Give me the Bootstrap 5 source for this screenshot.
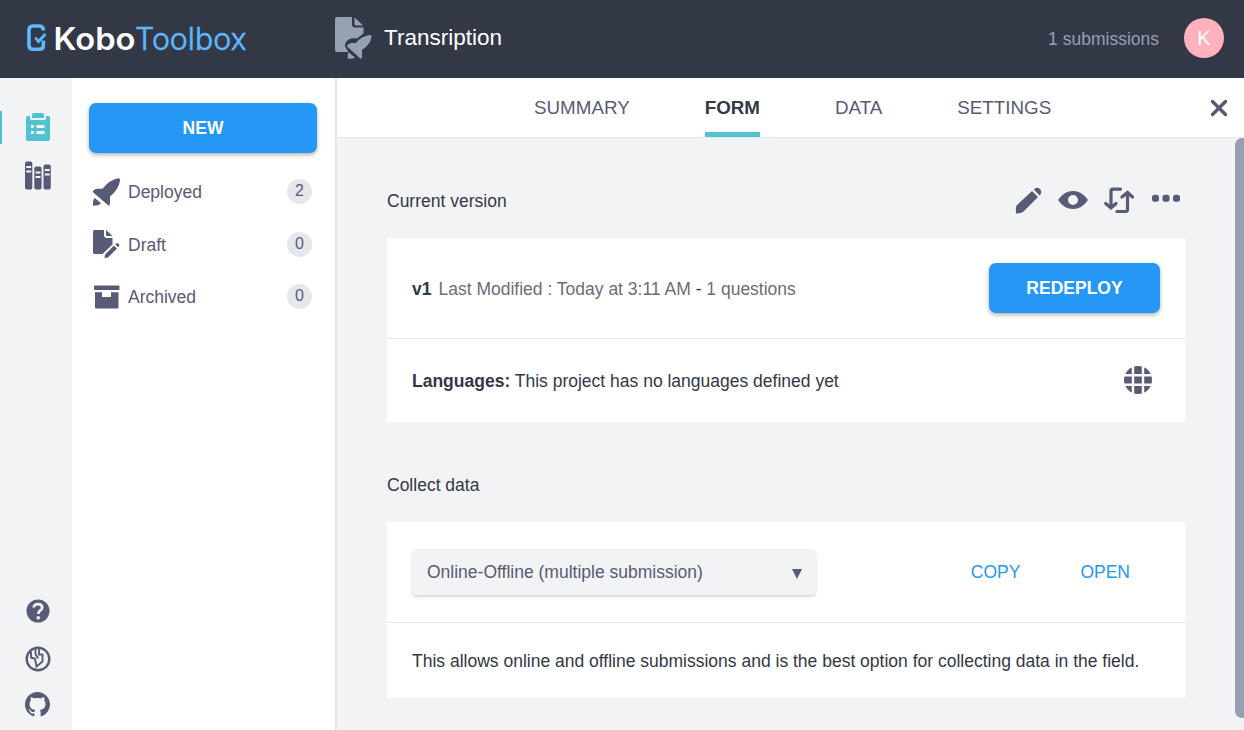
<!DOCTYPE html>
<html lang="en">
<head>
<meta charset="utf-8">
<meta name="viewport" content="width=device-width, initial-scale=1">
<title>KoboToolbox - Transription</title>
<link href="https://cdn.jsdelivr.net/npm/bootstrap@5.3.0/dist/css/bootstrap.min.css" rel="stylesheet">
<style>
  :root { --ink:#575b76; --dark:#333847; --line:#e6e7ed; --panel:#f2f3f5; --blue:#2598f5; --teal:#50c3d1; }
  body { font-family:"Liberation Sans",Arial,sans-serif; font-size:17.5px; line-height:24px; color:#333847; background:var(--panel); height:100vh; overflow:hidden; }
  svg { display:block; flex:none; }
  .topbar { height:78px; background:var(--dark); padding:0 20px 2px 26px; }
  .form-title { font-size:22.5px; line-height:30px; color:#fff; margin-left:13px; }
  .sub-count { color:#989fb3; margin-right:25px; padding-top:1px; }
  .avatar { width:40px; height:40px; background:#ffb1be; color:#fff; font-size:20px; }
  .rail { width:72px; padding:33px 0 13.5px; color:var(--ink); }
  .rail-link { width:100%; padding-left:2px; color:inherit; }
  .rail-link.active { border-left:2px solid var(--teal); padding:0 0 2px; color:var(--teal); height:33px; }
  .sidebar { width:265px; background:#fff; border-right:2px solid var(--line); padding:25px 18px 0 17px; color:var(--ink); }
  .btn-kobo { --bs-btn-color:#fff; --bs-btn-bg:var(--blue); --bs-btn-hover-bg:#1f86da; --bs-btn-hover-color:#fff; height:50px; border:0; border-radius:7px; font-size:17.5px; font-weight:700; line-height:24px; box-shadow:0 2px 4px rgba(0,0,0,.3); }
  .filter-row { height:26px; padding:0 5px 0 3px; }
  .filter-row svg { margin-right:7px; }
  .count { width:25px; height:25px; margin-top:-2px; background:var(--line); font-size:16px; line-height:24px; text-align:center; }
  .tabs { height:60px; background:#fff; border-bottom:1px solid var(--line); padding:0 16px 0 197px; font-size:18.8px; }
  .tab-item { height:59px; margin-right:75px; line-height:60px; color:var(--ink); text-decoration:none; }
  .tab-item.active { color:var(--dark); font-weight:700; border-bottom:5px solid var(--teal); }
  .close-btn { margin-left:auto; color:var(--ink); }
  .content { padding:38px 50px 0; }
  .section-head { height:50px; }
  .tools { color:var(--ink); }
  .panel { background:#fff; }
  .panel-row { padding:0 25px; }
  .panel-row + .panel-row { border-top:1px solid var(--line); }
  .meta { color:#6b6d78; margin-left:7px; }
  .picker { width:404px; height:46px; margin-left:-.5px; background:var(--panel); border-radius:5px; box-shadow:0 2px 3px rgba(0,0,0,.16); padding:0 14px 0 15.5px; color:var(--ink); }
  .act { color:var(--blue); text-decoration:none; }
  .scroll-col { width:9px; height:580px; background:#979fb2; border-radius:7px 0 0 7px; }
</style>
</head>
<body class="d-flex flex-column">
<header class="topbar d-flex align-items-center flex-shrink-0">
  <svg width="226" height="40" viewBox="0 0 226 40" role="img" aria-label="KoboToolbox">
    <path d="M17.300 12.500V12Q17.300 8 13.500 8H7Q3 8 3 12V27.500Q3 31.300 7 31.300H13.500Q17.300 31.300 17.300 27.500V22.500" fill="none" stroke="#5eb8fd" stroke-width="3.600"/>
    <path d="M9.300 19.500l3.200 4 7-7.500" fill="none" stroke="#5eb8fd" stroke-width="2.800"/>
    <text x="27.500" y="31.500" font-family="Inter,sans-serif" font-size="31" font-weight="600" fill="#fff" textLength="82" lengthAdjust="spacingAndGlyphs">Kobo</text>
    <text x="109" y="31.500" font-family="Inter,sans-serif" font-size="30.500" font-weight="300" fill="#5eb8fd" stroke="#5eb8fd" stroke-width=".6" textLength="111.500" lengthAdjust="spacingAndGlyphs">Toolbox</text>
  </svg>
  <svg style="margin-left:82px" width="38" height="42" viewBox="0 0 38 42" fill="#98a0b4">
    <path d="M3 0H18V7.500Q18 10.500 21 10.500H29.500V16.500L23 21.500Q16 20.500 12.500 24.500Q9.500 28 12.500 32L14.500 35H3Q1 35 1 33V2Q1 0 3 0z"/><path d="M20.500 0.500l8.500 8H22Q20.500 8.500 20.500 7z"/>
    <path d="M35.500 18Q38 17.600 37.500 20Q36 28 28 33V40.500Q27.500 42.500 26 41.200L12.800 29.200Q14 26.500 17 26H22Q27.500 19 35.500 18z"/><path d="M14.500 35.300l6.500 5.200q-2.500 1.700-7 1.200q-.8-3.500.5-6.400z"/>
  </svg>
  <div class="form-title" style="margin-left:12px">Transription</div>
  <div class="sub-count ms-auto">1 submissions</div>
  <div class="avatar rounded-circle d-flex align-items-center justify-content-center">K</div>
</header>

<div class="d-flex flex-grow-1">
  <nav class="rail d-flex flex-column flex-shrink-0">
    <a class="rail-link active d-flex align-items-center justify-content-center" href="#" aria-label="Projects">
      <svg style="margin-left:1px" width="24" height="28" viewBox="0 0 24 28"><path fill="currentColor" d="M2 3H4V5Q4 7 6 7H18Q20 7 20 5V3H22Q24 3 24 5V26Q24 28 22 28H2Q0 28 0 26V5Q0 3 2 3z"/><path fill="currentColor" d="M6 2Q6 0 8 0H16Q18 0 18 2V5H6z"/><path stroke="#f2f3f5" stroke-width="3" d="M5 13.500h3M10.500 13.500H18.500M5 19.500h3M10.500 19.500H18.500"/></svg>
    </a>
    <a class="rail-link d-flex justify-content-center" style="margin-top:17px" href="#" aria-label="Library">
      <svg style="margin-left:1px" width="26" height="29" viewBox="0 0 26 29"><g fill="currentColor"><rect y=".5" width="7.300" height="28" rx="2"/><rect x="9.300" y="5.500" width="7.300" height="23" rx="2"/><rect x="18.500" y="3.500" width="7.300" height="25" rx="2"/></g><path d="M1.200 6h5M1.200 10.500h5M10.500 11.500h5M10.500 16h5M19.800 9h5M19.800 13.500h5" stroke="#f2f3f5" stroke-width="1.800"/></svg>
    </a>
    <div class="mt-auto d-flex flex-column align-items-center" style="padding-left:3px">
      <svg width="24" height="24" viewBox="0 0 24 24"><circle cx="12" cy="12" r="11.500" fill="currentColor"/><path d="M7.800 8.500Q8 5.200 12.200 5.200Q16.200 5.200 16.200 8.700Q16.200 10.300 14 11.700Q12.500 12.700 12.400 15" fill="none" stroke="#f2f3f5" stroke-width="2.700"/><circle cx="12.300" cy="18.700" r="1.800" fill="#f2f3f5"/></svg>
      <svg style="margin-top:23px" width="26" height="26" viewBox="0 0 26 26" fill="none" stroke="currentColor"><circle cx="13" cy="13" r="11.300" stroke-width="2.400"/><path d="M6 5.500V11.500L10 12.800 11.500 20.500 17.500 15.500V8.500H14V3M10.500 3V8L13 12.500" stroke-width="1.900"/></svg>
      <svg style="margin-top:20px" width="25" height="25" viewBox="0 0 16 16" fill="currentColor"><path d="M8 0C3.580 0 0 3.580 0 8c0 3.540 2.290 6.530 5.470 7.590.4.070.55-.17.55-.38 0-.19-.01-.82-.01-1.490-2.010.37-2.530-.49-2.690-.94-.09-.23-.48-.94-.82-1.130-.28-.15-.68-.52-.01-.53.63-.01 1.080.58 1.230.82.72 1.210 1.870.87 2.330.66.070-.52.28-.87.51-1.070-1.780-.2-3.640-.89-3.640-3.950 0-.87.31-1.590.82-2.150-.08-.2-.36-1.020.08-2.120 0 0 .67-.21 2.200.82.640-.18 1.320-.27 2-.27s1.360.09 2 .27c1.530-1.040 2.200-.82 2.200-.82.440 1.100.16 1.920.08 2.120.51.560.82 1.270.82 2.150 0 3.070-1.870 3.750-3.650 3.950.29.250.54.730.54 1.480 0 1.070-.01 1.930-.01 2.200 0 .21.150.46.550.38A8 8 0 0 0 16 8c0-4.420-3.580-8-8-8z"/></svg>
    </div>
  </nav>

  <aside class="sidebar flex-shrink-0">
    <button class="btn btn-kobo w-100" type="button">NEW</button>
    <div class="filter-row d-flex align-items-center" style="margin-top:26px">
      <svg width="29" height="28" viewBox="0 0 29 28" fill="currentColor"><path d="M25.500 .4Q28.500-.2 28 2.500Q26.500 12 18 18.500V25.500Q17.500 28.500 15.500 26.800L1 14.200Q.5 13 2 12Q3.500 10.800 6 10.800H10.500Q17 2 25.500 .4z"/><path d="M2.800 20l6.200 5.300q-2 2.500-8 2.500q-.5-5.500 1.800-7.800z"/></svg>
      <span>Deployed</span><span class="count rounded-circle ms-auto">2</span>
    </div>
    <div class="filter-row d-flex align-items-center" style="margin-top:27px">
      <svg style="margin-top:-2px" width="29" height="28" viewBox="0 0 29 28" fill="currentColor"><path d="M2.500 0H12V5Q12 8 15 8H20.500V14.500L10.500 24H2.500Q1 24 1 22.500V1.500Q1 0 2.500 0z"/><path d="M14 0l6.500 6H15Q14 6 14 5zM22 15.500l3 3-9 9-3.500.5.5-3.500zM23.200 14.300l1-1q1.500-.5 2.500.5t.5 2.500l-1 1z"/></svg>
      <span>Draft</span><span class="count rounded-circle ms-auto">0</span>
    </div>
    <div class="filter-row d-flex align-items-center" style="margin-top:26px">
      <svg width="29" height="24" viewBox="0 0 29 24" fill="currentColor"><path d="M3 .5H26.500Q27.500.5 27.500 1.500V4Q27.500 5 26.500 5H3Q2 5 2 4V1.500Q2 .5 3 .5zM3 7.200H10V12H19V7.200H26.500V22.500Q26.500 23.500 25.500 23.500H4Q3 23.500 3 22.500z"/></svg>
      <span>Archived</span><span class="count rounded-circle ms-auto">0</span>
    </div>
  </aside>

  <main class="flex-grow-1">
    <nav class="tabs d-flex">
      <a class="tab-item" href="#">SUMMARY</a><a class="tab-item active" href="#">FORM</a><a class="tab-item" href="#">DATA</a><a class="tab-item me-0" href="#">SETTINGS</a>
      <a class="close-btn d-flex align-items-center" href="#" aria-label="Close"><svg width="18" height="18" viewBox="0 0 18 18"><path d="M2.500 2.500l13 13M15.500 2.500l-13 13" stroke="currentColor" stroke-width="3.400" stroke-linecap="round"/></svg></a>
    </nav>
    <div class="d-flex">
      <div class="content flex-grow-1">
        <div class="section-head d-flex align-items-center" style="margin-bottom:12px">
          <span>Current version</span>
          <div class="tools d-flex ms-auto align-items-center" style="gap:16px;margin:-2px 5.500px 0 0">
            <svg width="27" height="27" viewBox="0 0 27 27" fill="currentColor"><path d="M17 4l6 6L8 25Q5 26.500 1 26.500Q.5 22 1.500 18.500zM18.700 2.500Q22-.8 25.200 2.200Q27.500 5.500 24.700 8.500z"/></svg>
            <svg width="30" height="20" viewBox="0 0 30 20"><path fill="currentColor" fill-rule="evenodd" d="M0 10Q6 1 15 1T30 10Q24 19 15 19T0 10zM15 5a5 5 0 1 0 0 10a5 5 0 0 0 0-10z"/></svg>
            <svg width="30" height="27" viewBox="0 0 30 27" fill="none" stroke="currentColor" stroke-width="3.200" stroke-linecap="round"><path d="M16.500 2.200H9Q7 2.200 7 4.200V19M1.700 16.500L7 21l5-4.500M13 24.500H21.500Q23.500 24.500 23.500 22.500V7M18 10L23.500 5.300 28.500 10"/></svg>
            <svg style="margin:-4px 0 0 2px" width="28" height="8" viewBox="0 0 28 8" fill="currentColor"><rect y=".7" width="7" height="7" rx="2.500"/><rect x="10.500" y=".7" width="7" height="7" rx="2.500"/><rect x="21" y=".7" width="7" height="7" rx="2.500"/></svg>
          </div>
        </div>
        <section class="panel">
          <div class="panel-row d-flex align-items-center" style="height:100px">
            <div style="padding-top:2px"><b>v1</b><span class="meta">Last Modified : Today at 3:11 AM <span style="color:#333847">-</span> 1 questions</span></div>
            <button class="btn btn-kobo ms-auto" style="width:171px" type="button">REDEPLOY</button>
          </div>
          <div class="panel-row d-flex align-items-center" style="height:84px">
            <div><b>Languages:</b> This project has no languages defined yet</div>
            <svg class="ms-auto" style="margin-right:8px;margin-top:-2px;color:#575b76" width="28" height="28" viewBox="0 0 28 28"><circle cx="14" cy="14" r="14" fill="currentColor"/><path d="M9 0V28M19 0V28M0 9.200H28M0 18.800H28" stroke="#fff" stroke-width="2.400"/></svg>
          </div>
        </section>
        <div class="section-head d-flex align-items-center" style="margin:38px 0 12px">Collect data</div>
        <section class="panel">
          <div class="panel-row d-flex align-items-center" style="height:100px">
            <div class="picker d-flex align-items-center justify-content-between">
              <span>Online-Offline (multiple submission)</span>
              <svg style="margin-top:3px" width="10" height="10" viewBox="0 0 10 10"><path d="M0 0H10L5 10z" fill="currentColor"/></svg>
            </div>
            <a class="act ms-auto" href="#">COPY</a><a class="act" style="margin:0 30px 0 60px" href="#">OPEN</a>
          </div>
          <div class="panel-row d-flex align-items-center" style="height:76px">This allows online and offline submissions and is the best option for collecting data in the field.</div>
        </section>
      </div>
      <div class="scroll-col flex-shrink-0"></div>
    </div>
  </main>
</div>
<script src="https://cdn.jsdelivr.net/npm/bootstrap@5.3.0/dist/js/bootstrap.bundle.min.js"></script>
</body>
</html>
